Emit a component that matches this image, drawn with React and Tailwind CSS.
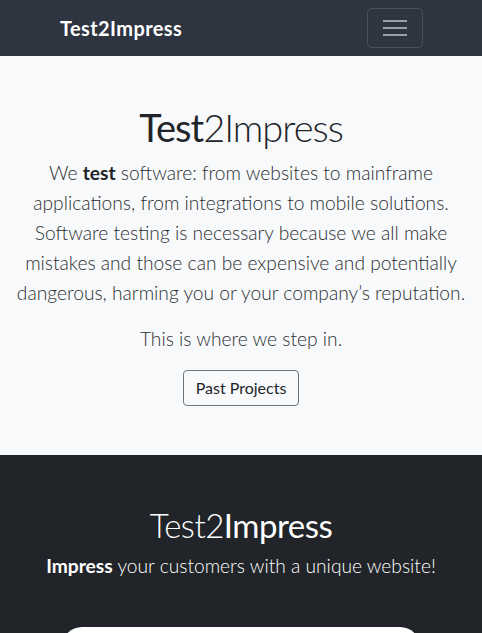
export default function App() {
  return (
    <div className="h-[633px] overflow-hidden bg-[#212529]" style={{ fontFamily: 'Lato, "Noto Sans", sans-serif' }}>
      <nav className="h-[56px] bg-[#2e3440] flex items-center justify-between pl-[60px] pr-[59px]">
        <span className="text-white font-bold text-[20px] tracking-[0.4px]">Test2Impress</span>
        <button className="w-[56px] h-[40px] border border-[#4a505a] rounded-[5px] flex flex-col items-center justify-center gap-[5px]">
          <span className="block w-[24px] h-[2px] bg-[#9ba0a7]"></span>
          <span className="block w-[24px] h-[2px] bg-[#9ba0a7]"></span>
          <span className="block w-[24px] h-[2px] bg-[#9ba0a7]"></span>
        </button>
      </nav>
      <section className="bg-[#f8f9fa] h-[399px] flex flex-col items-center pt-[47px] text-[#212529]">
        <h1 className="text-[38px] leading-[48px] font-light tracking-[-1px]">
          <span className="font-normal">Test</span>2Impress
        </h1>
        <p className="mt-[7px] text-[19.2px] leading-[30px] font-light text-center px-[4px] text-[#2b2f33]">
          We <span className="font-bold text-[#212529]">test</span> software: from websites to mainframe applications, from integrations to mobile solutions. Software testing is necessary because we all make mistakes and those can be expensive and potentially dangerous, harming you or your company’s reputation.
        </p>
        <p className="mt-[16px] text-[19.2px] leading-[30px] font-light text-[#2b2f33]">This is where we step in.</p>
        <button className="mt-[16px] h-[36px] px-[12px] border border-[#6c757d] rounded-[4px] text-[16px] text-[#212529]">Past Projects</button>
      </section>
      <section className="flex flex-col items-center pt-[50px] text-white">
        <h2 className="text-[33px] leading-[40px] font-light tracking-[-0.5px]">
          Test2<span className="font-normal">Impress</span>
        </h2>
        <p className="mt-[6px] text-[19.2px] leading-[30px] font-light">
          <span className="font-bold">Impress</span> your customers with a unique website!
        </p>
        <div className="mt-[46px] w-[358px] h-[40px] bg-white rounded-full"></div>
      </section>
    </div>
  );
}
